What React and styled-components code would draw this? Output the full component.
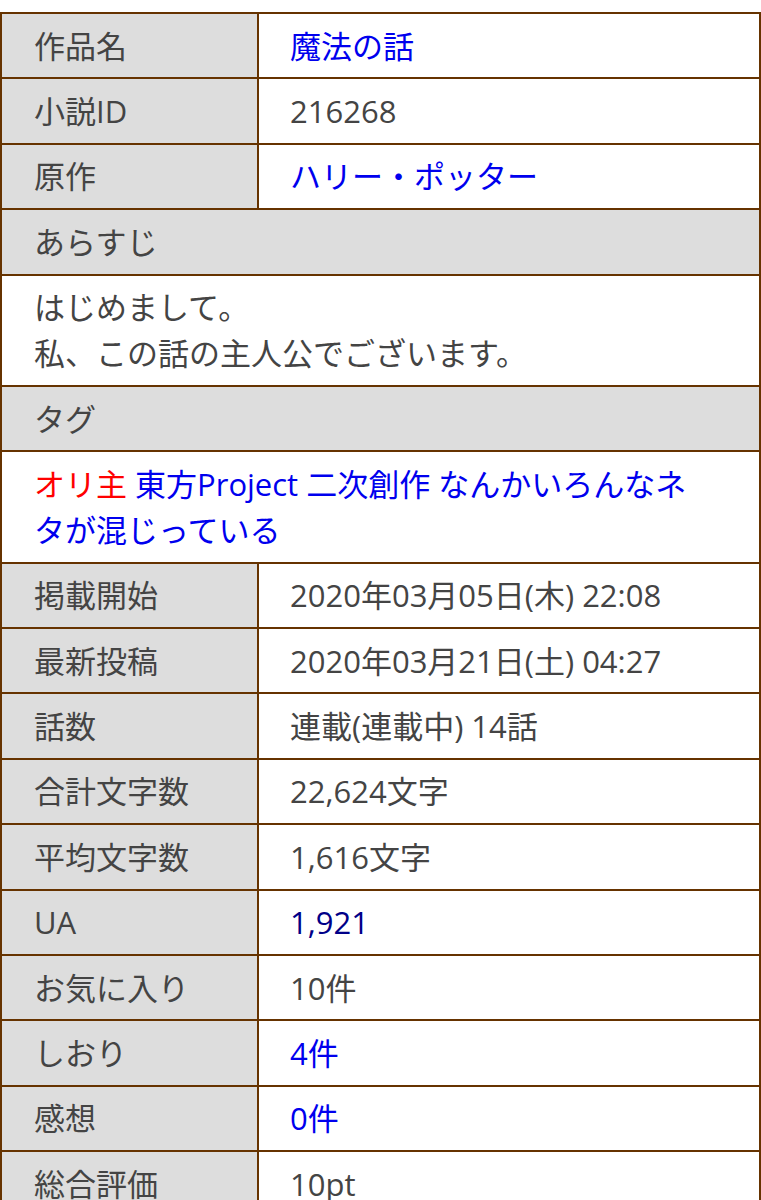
import React from "react";
import styled, { createGlobalStyle } from "styled-components";

const GlobalStyle = createGlobalStyle`
  html, body {
    margin: 0;
    padding: 0;
    background: #fff;
  }
  body {
    font-family: "Open Sans", "Noto Sans CJK JP", sans-serif;
  }
`;

const Page = styled.div`
  padding-top: 12px;
`;

const InfoTable = styled.table`
  width: 100%;
  border-collapse: collapse;
  border: 2px solid #663300;
  font-size: 31px;
  line-height: 46px;
  color: #444;
`;

const Label = styled.th`
  width: 223px;
  padding: 8.7px 0 8.7px 32px;
  background: #dddddd;
  border: 2px solid #663300;
  font-weight: normal;
  text-align: left;
  vertical-align: middle;
  white-space: nowrap;
`;

const Value = styled.td`
  padding: 8.7px 16px 8.7px 31px;
  border: 2px solid #663300;
  vertical-align: middle;
`;

const Wide = styled.td`
  padding: 8.7px 48px 8.7px 32px;
  border: 2px solid #663300;
  background: ${(p) => (p.$head ? "#dddddd" : "#fff")};
`;

const Link = styled.a`
  color: ${(p) => (p.$red ? "#ff0000" : p.$visited ? "#000088" : "#0000ee")};
  text-decoration: none;
`;

const rows = [
  { label: "掲載開始", value: "2020年03月05日(木) 22:08" },
  { label: "最新投稿", value: "2020年03月21日(土) 04:27" },
  { label: "話数", value: "連載(連載中) 14話" },
  { label: "合計文字数", value: "22,624文字" },
  { label: "平均文字数", value: "1,616文字" },
  { label: "UA", value: "1,921", link: true, visited: true },
  { label: "お気に入り", value: "10件" },
  { label: "しおり", value: "4件", link: true },
  { label: "感想", value: "0件", link: true },
  { label: "総合評価", value: "10pt" },
];

const tags = ["東方Project", "二次創作", "なんかいろんなネタが混じっている"];

export default function App() {
  return (
    <Page>
      <GlobalStyle />
      <InfoTable>
        <tbody>
          <tr>
            <Label>作品名</Label>
            <Value>
              <Link href="#">魔法の話</Link>
            </Value>
          </tr>
          <tr>
            <Label>小説ID</Label>
            <Value>216268</Value>
          </tr>
          <tr>
            <Label>原作</Label>
            <Value>
              <Link href="#">ハリー・ポッター</Link>
            </Value>
          </tr>
          <tr>
            <Wide colSpan={2} $head>
              あらすじ
            </Wide>
          </tr>
          <tr>
            <Wide colSpan={2}>
              はじめまして。
              <br />
              私、この話の主人公でございます。
            </Wide>
          </tr>
          <tr>
            <Wide colSpan={2} $head>
              タグ
            </Wide>
          </tr>
          <tr>
            <Wide colSpan={2}>
              <Link href="#" $red>
                オリ主
              </Link>{" "}
              {tags.map((t, i) => (
                <React.Fragment key={t}>
                  <Link href="#">{t}</Link>
                  {i < tags.length - 1 ? " " : ""}
                </React.Fragment>
              ))}
            </Wide>
          </tr>
          {rows.map((r) => (
            <tr key={r.label}>
              <Label>{r.label}</Label>
              <Value>
                {r.link ? (
                  <Link href="#" $visited={r.visited}>
                    {r.value}
                  </Link>
                ) : (
                  r.value
                )}
              </Value>
            </tr>
          ))}
        </tbody>
      </InfoTable>
    </Page>
  );
}
